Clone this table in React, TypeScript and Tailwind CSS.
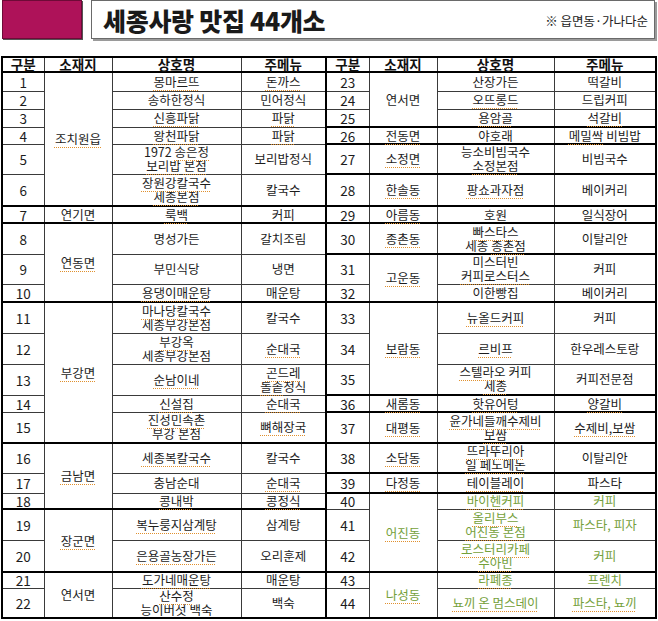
import React from 'react';

interface Row { n: string; area?: string; span?: number; name: string; menu: string; g?: boolean; }

const left: Row[] = [
  { n: '1', area: '{조치원읍}', span: 6, name: '{몽마르뜨}', menu: '{돈까스}' },
  { n: '2', name: '송하한정식', menu: '민어정식' },
  { n: '3', name: '{신흥파닭}', menu: '{파닭}' },
  { n: '4', name: '{왕천파닭}', menu: '{파닭}' },
  { n: '5', name: '1972 {송은정}\n{보리밥} {본점}', menu: '보리밥정식' },
  { n: '6', name: '{장원강칼국수}\n{세종본점}', menu: '칼국수' },
  { n: '7', area: '연기면', span: 1, name: '{룩백}', menu: '커피' },
  { n: '8', area: '{연동면}', span: 3, name: '명성가든', menu: '갈치조림' },
  { n: '9', name: '부민식당', menu: '냉면' },
  { n: '10', name: '{용댕이매운탕}', menu: '매운탕' },
  { n: '11', area: '{부강면}', span: 5, name: '{마나당칼국수}\n세종부강본점', menu: '칼국수' },
  { n: '12', name: '{부강옥}\n세종부강본점', menu: '{순대국}' },
  { n: '13', name: '{순남이네}', menu: '{곤드레}\n{돌솥}정식' },
  { n: '14', name: '{신설집}', menu: '{순대국}' },
  { n: '15', name: '{진성민속촌}\n부강 본점', menu: '{뼈해장국}' },
  { n: '16', area: '{금남면}', span: 3, name: '{세종복칼국수}', menu: '칼국수' },
  { n: '17', name: '충남순대', menu: '{순대국}' },
  { n: '18', name: '{콩내박}', menu: '{콩정식}' },
  { n: '19', area: '{장군면}', span: 2, name: '{복누룽지삼계탕}', menu: '삼계탕' },
  { n: '20', name: '{은용골농장가든}', menu: '오리훈제' },
  { n: '21', area: '연서면', span: 2, name: '{도가네매운탕}', menu: '매운탕' },
  { n: '22', name: '{산수정}\n능이버섯 백숙', menu: '백숙' },
];

const right: Row[] = [
  { n: '23', area: '연서면', span: 3, name: '산장가든', menu: '떡갈비' },
  { n: '24', name: '{오뜨롱드}', menu: '드립커피' },
  { n: '25', name: '{용암골}', menu: '{석갈비}' },
  { n: '26', area: '{전동면}', span: 1, name: '야호래', menu: '{메밀싹} 비빔밥' },
  { n: '27', area: '{소정면}', span: 1, name: '능소비빔국수\n{소정본점}', menu: '비빔국수' },
  { n: '28', area: '{한솔동}', span: 1, name: '{팡쇼과자점}', menu: '베이커리' },
  { n: '29', area: '{아름동}', span: 1, name: '호원', menu: '일식장어' },
  { n: '30', area: '{종촌동}', span: 1, name: '{빠스타스}\n세종 {종촌점}', menu: '이탈리안' },
  { n: '31', area: '{고운동}', span: 2, name: '미스터빈\n{커피로스터스}', menu: '커피' },
  { n: '32', name: '이한빵집', menu: '베이커리' },
  { n: '33', area: '{보람동}', span: 3, name: '{뉴올드커피}', menu: '커피' },
  { n: '34', name: '{르비프}', menu: '한우레스토랑' },
  { n: '35', name: '{스텔라오} 커피\n{세종}', menu: '커피전문점' },
  { n: '36', area: '{새롬동}', span: 1, name: '{핫유어텅}', menu: '{양갈비}' },
  { n: '37', area: '{대평동}', span: 1, name: '{윤가네들깨수제비}\n{보쌈}', menu: '{수제비,보쌈}' },
  { n: '38', area: '{소담동}', span: 1, name: '{뜨라뚜리아}\n{일 페노메논}', menu: '이탈리안' },
  { n: '39', area: '{다정동}', span: 1, name: '{테이블레이}', menu: '파스타' },
  { n: '40', area: '{어진동}', span: 3, name: '{바이헨커피}', menu: '커피', g: true },
  { n: '41', name: '{올리부스}\n{어진동 본점}', menu: '파스타, 피자', g: true },
  { n: '42', name: '{로스터리카페}\n{수아빈}', menu: '커피', g: true },
  { n: '43', area: '{나성동}', span: 2, name: '{라폐종}', menu: '프렌치', g: true },
  { n: '44', name: '{뇨끼 온 멈스데이}', menu: '{파스타, 뇨끼}', g: true },
];

const heights = [
  'h-[19px]', 'h-[18px]', 'h-[18px]', 'h-[17px]', 'h-[30px]', 'h-[32px]', 'h-[17px]', 'h-[31px]',
  'h-[30px]', 'h-[18px]', 'h-[31px]', 'h-[31px]', 'h-[31px]', 'h-[17px]', 'h-[31px]', 'h-[30px]',
  'h-[20px]', 'h-[16px]', 'h-[31px]', 'h-[32px]', 'h-[16px]', 'h-[29px]',
];

// "{word}" gets the orange spell-check squiggle
function Txt({ s }: { s: string }) {
  const parts = s.split(/(\{[^}]+\})/);
  return (
    <>
      {parts.map((p, i) =>
        p.startsWith('{') ? (
          <span key={i} className="underline decoration-dotted decoration-[#e0902e] decoration-1 underline-offset-[3px]">{p.slice(1, -1)}</span>
        ) : (
          <React.Fragment key={i}>{p}</React.Fragment>
        )
      )}
    </>
  );
}

const isEnd = (rows: Row[], i: number) => i === rows.length - 1 || !!rows[i + 1].area;

function Half({ rows, i }: { rows: Row[]; i: number }) {
  const r = rows[i];
  const b = isEnd(rows, i) ? 'border-b-2 border-b-black' : 'border-b border-b-[#3a3a3a]';
  const color = r.g ? 'text-[#74a03a]' : 'text-[#1c1c1c]';
  return (
    <>
      <td className={`${b} border-r border-r-[#3a3a3a] text-[13.5px] text-[#1c1c1c]`}>{r.n}</td>
      {r.area && (
        <td rowSpan={r.span} className={`border-b-2 border-b-black border-r border-r-[#3a3a3a] ${color}`}><Txt s={r.area} /></td>
      )}
      <td className={`${b} border-r border-r-[#3a3a3a] whitespace-pre-line ${color}`}><Txt s={r.name} /></td>
      <td className={`${b} border-r-2 border-r-black whitespace-pre-line ${color}`}><Txt s={r.menu} /></td>
    </>
  );
}

export default function App() {
  const head = ['구분', '소재지', '상호명', '주메뉴', '구분', '소재지', '상호명', '주메뉴'];
  return (
    <div className="w-[658px] h-[621px] bg-white font-['Noto_Sans_CJK_KR',sans-serif] overflow-hidden">
      <div className="flex h-[40px]">
        <div className="ml-[2px] w-[80px] h-[39px] bg-[#ae1259] border border-[#6e0a37] shadow-[1px_1px_0_#555]" />
        <div className="ml-[9px] mr-[3px] flex-1 h-[39px] border border-[#6a6a6a] shadow-[2px_2px_0_#9a9a9a] flex items-center justify-between pl-[11px] pr-[6px]">
          <div className="text-[25px] leading-[30px] font-black text-[#1a1a1a] tracking-[-0.3px]">세종사랑 맛집 44개소</div>
          <div className="text-[12.5px] text-[#222] mt-[4px]">※ 읍면동·가나다순</div>
        </div>
      </div>
      <table className="mt-[16px] ml-[1px] w-[654px] table-fixed border-collapse border-2 border-black text-[12.5px] leading-[14px] text-center">
        <colgroup>
          <col className="w-[42px]" />
          <col className="w-[68px]" />
          <col className="w-[129px]" />
          <col className="w-[85px]" />
          <col className="w-[43px]" />
          <col className="w-[68px]" />
          <col className="w-[117px]" />
          <col className="w-[102px]" />
        </colgroup>
        <tbody>
          <tr className="h-[15px]">
            {head.map((h, i) => (
              <td key={i} className={`border-b-2 border-b-black ${i === 3 ? 'border-r-2 border-r-black' : 'border-r border-r-[#3a3a3a]'} font-bold text-[13.5px] leading-[13px] text-[#111]`}>{h}</td>
            ))}
          </tr>
          {left.map((_, i) => (
            <tr key={i} className={heights[i]}>
              <Half rows={left} i={i} />
              <Half rows={right} i={i} />
            </tr>
          ))}
        </tbody>
      </table>
    </div>
  );
}
